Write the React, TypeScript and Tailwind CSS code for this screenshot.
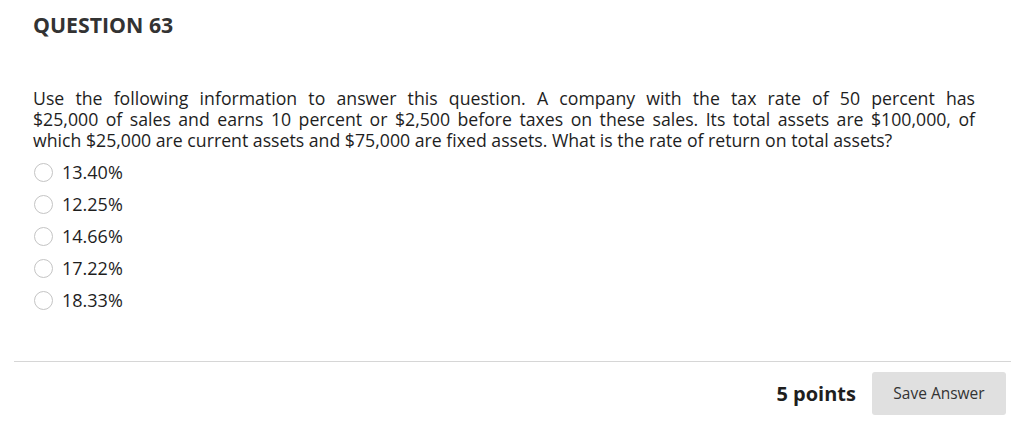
import { useState } from "react";

const OPTIONS = ["13.40%", "12.25%", "14.66%", "17.22%", "18.33%"];

// the three lines of the question, laid out as in the original
const LINES = [
  "Use the following information to answer this question. A company with the tax rate of 50 percent has",
  "$25,000 of sales and earns 10 percent or $2,500 before taxes on these sales. Its total assets are $100,000, of",
  "which $25,000 are current assets and $75,000 are fixed assets. What is the rate of return on total assets?",
];

export default function App() {
  const [picked, setPicked] = useState<string | null>(null);

  return (
    <main className="h-[424px] w-[1024px] bg-white font-['Open_Sans',sans-serif] text-[#1e1e1e]">
      <div className="px-[14px]">
        <div className="px-[19px] pt-[10px]">
          <h1 className="text-[21.3px] leading-[30px] font-bold text-[#333]">QUESTION 63</h1>

          <p className="mt-[48px] w-[942px] text-[17.7px] leading-[21px]">
            {LINES.map((line, i) => (
              <span
                key={i}
                className={
                  i < LINES.length - 1
                    ? "block text-justify whitespace-nowrap [text-align-last:justify]"
                    : "block whitespace-nowrap"
                }
              >
                {line}
              </span>
            ))}
          </p>

          <div className="mt-[5px]">
            {OPTIONS.map((option) => (
              <label key={option} className="flex h-[32px] items-center gap-[9px] text-[18px]">
                <button
                  type="button"
                  onClick={() => setPicked(option)}
                  className="ml-[1px] flex h-[19px] w-[19px] items-center justify-center rounded-full border border-[#c4c4c4] bg-white"
                >
                  {picked === option && <span className="h-[9px] w-[9px] rounded-full bg-[#333]" />}
                </button>
                {option}
              </label>
            ))}
          </div>
        </div>

        <div className="mt-[45px] h-px w-[997px] bg-[#d6d6d6]" />

        <div className="flex items-center justify-end gap-[16px] pt-[10px] pr-[4px]">
          <span className="text-[20px] font-bold text-[#1e1e1e]">5 points</span>
          <button
            type="button"
            className="h-[43px] w-[134px] rounded-[3px] bg-[#e0e0e0] text-[15.5px] text-[#333]"
          >
            Save Answer
          </button>
        </div>
      </div>
    </main>
  );
}
